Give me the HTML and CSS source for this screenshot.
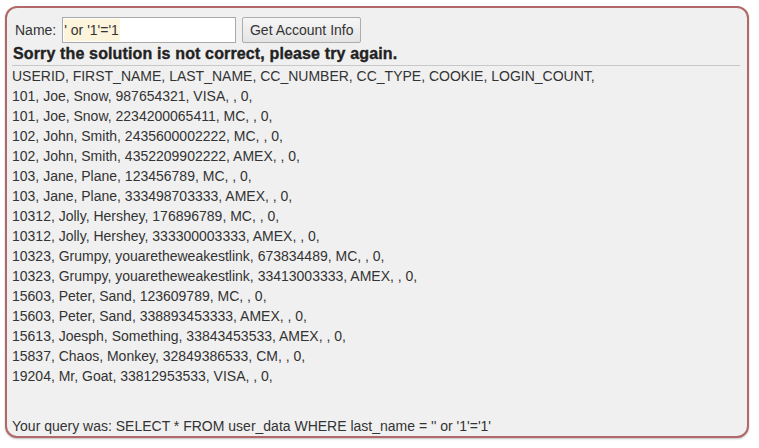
FILE: index.html
```html
<!DOCTYPE html>
<html>
<head>
<meta charset="utf-8">
<link rel="stylesheet" href="styles.css">
</head>
<body>
<div class="panel">
  <form class="form">
    <label class="label">Name:</label>
    <div class="input"><span class="hl">' or '1'='1</span></div>
    <button type="button" class="btn">Get Account Info</button>
  </form>
  <div class="feedback">Sorry the solution is not correct, please try again.</div>
  <div class="output">
    <div>USERID, FIRST_NAME, LAST_NAME, CC_NUMBER, CC_TYPE, COOKIE, LOGIN_COUNT, </div>
    <div>101, Joe, Snow, 987654321, VISA, , 0, </div>
    <div>101, Joe, Snow, 2234200065411, MC, , 0, </div>
    <div>102, John, Smith, 2435600002222, MC, , 0, </div>
    <div>102, John, Smith, 4352209902222, AMEX, , 0, </div>
    <div>103, Jane, Plane, 123456789, MC, , 0, </div>
    <div>103, Jane, Plane, 333498703333, AMEX, , 0, </div>
    <div>10312, Jolly, Hershey, 176896789, MC, , 0, </div>
    <div>10312, Jolly, Hershey, 333300003333, AMEX, , 0, </div>
    <div>10323, Grumpy, youaretheweakestlink, 673834489, MC, , 0, </div>
    <div>10323, Grumpy, youaretheweakestlink, 33413003333, AMEX, , 0, </div>
    <div>15603, Peter, Sand, 123609789, MC, , 0, </div>
    <div>15603, Peter, Sand, 338893453333, AMEX, , 0, </div>
    <div>15613, Joesph, Something, 33843453533, AMEX, , 0, </div>
    <div>15837, Chaos, Monkey, 32849386533, CM, , 0, </div>
    <div>19204, Mr, Goat, 33812953533, VISA, , 0, </div>
  </div>
  <p class="query">Your query was: SELECT * FROM user_data WHERE last_name = '' or '1'='1'</p>
</div>
</body>
</html>
```
FILE: styles.css
```css
html, body { margin: 0; padding: 0; background: #fff; }
body {
  font-family: "Liberation Sans", Arial, sans-serif;
  font-size: 14px;
  color: #333;
  padding: 6px 6px 6px 5px;
}
.panel {
  width: 744px;
  height: 432px;
  box-sizing: border-box;
  background: #f0f0f0;
  border: 2px solid #b06868;
  border-radius: 12px;
  box-shadow: 0 1px 2px rgba(0,0,0,0.25);
  padding: 8px 5px 0 5px;
}
.form {
  display: flex;
  align-items: center;
  margin: 0;
  height: 28px;
}
.label { margin-left: 3px; margin-right: 6px; }
.input {
  width: 174px;
  height: 26px;
  box-sizing: border-box;
  border: 1px solid #a9a9a9;
  background: #fff;
  padding: 2px 1px;
  display: flex;
  align-items: center;
}
.hl {
  background: #fdf4dc;
  line-height: 22px;
  padding-right: 1px;
}
.btn {
  margin-left: 6px;
  height: 26px;
  width: 119px;
  font-family: inherit;
  font-size: 14px;
  color: #333;
  background: linear-gradient(#f6f6f6, #e4e4e4);
  border: 1px solid #adadad;
  border-radius: 2px;
  padding: 0;
}
.feedback {
  font-weight: bold;
  font-size: 16px;
  line-height: 20px;
  letter-spacing: 0.14px;
  -webkit-text-stroke: 0.35px #222;
  color: #222;
  margin-top: 0;
  padding-left: 1px;
  padding-bottom: 1px;
  border-bottom: 1px solid #c8c8c8;
  margin-right: 2px;
}
.output div { line-height: 20px; white-space: pre; }
.query { margin: 30px 0 0 0; line-height: 20px; }
```
